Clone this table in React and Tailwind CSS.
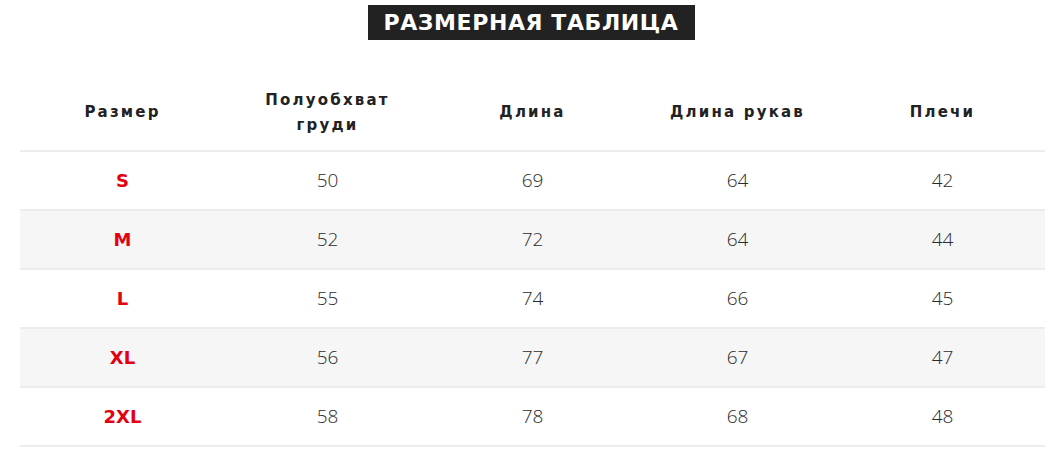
import React from "react";

const rows = [
  ["S", "50", "69", "64", "42"],
  ["M", "52", "72", "64", "44"],
  ["L", "55", "74", "66", "45"],
  ["XL", "56", "77", "67", "47"],
  ["2XL", "58", "78", "68", "48"],
];

const headFont = { fontFamily: '"DejaVu Sans", "Noto Sans", sans-serif' };

export default function App() {
  return (
    <div className="w-[1062px] h-[469px] bg-white overflow-hidden">
      <div className="flex justify-center pt-[5px]">
        <h2
          className="h-[35px] px-[16px] bg-[#222222] text-white font-bold text-[22px] tracking-[0.6px] flex items-center"
          style={headFont}
        >
          РАЗМЕРНАЯ ТАБЛИЦА
        </h2>
      </div>

      <div className="mx-[20px] w-[1025px] mt-[35px]">
        <div
          className="grid grid-cols-5 h-[77px] border-b-2 border-[#ececec] text-[#222222] font-bold text-[15px] tracking-[2.2px] leading-[25px]"
          style={headFont}
        >
          <div className="flex items-center justify-center text-center">Размер</div>
          <div className="flex items-center justify-center text-center">
            Полуобхват
            <br />
            груди
          </div>
          <div className="flex items-center justify-center text-center">Длина</div>
          <div className="flex items-center justify-center text-center">Длина рукав</div>
          <div className="flex items-center justify-center text-center">Плечи</div>
        </div>

        {rows.map((r, i) => (
          <div
            key={r[0]}
            className={
              "grid grid-cols-5 h-[59px] border-b-2 border-[#ececec] " +
              (i % 2 === 1 ? "bg-[#f6f6f6]" : "bg-white")
            }
          >
            <div
              className="flex items-center justify-center text-[#e3000f] font-bold text-[18px]"
              style={headFont}
            >
              {r[0]}
            </div>
            {r.slice(1).map((v, j) => (
              <div
                key={j}
                className="flex items-center justify-center text-[#2b2b2b] font-light text-[19px]"
                style={{ fontFamily: '"Open Sans", "Noto Sans", sans-serif' }}
              >
                {v}
              </div>
            ))}
          </div>
        ))}
      </div>
    </div>
  );
}
